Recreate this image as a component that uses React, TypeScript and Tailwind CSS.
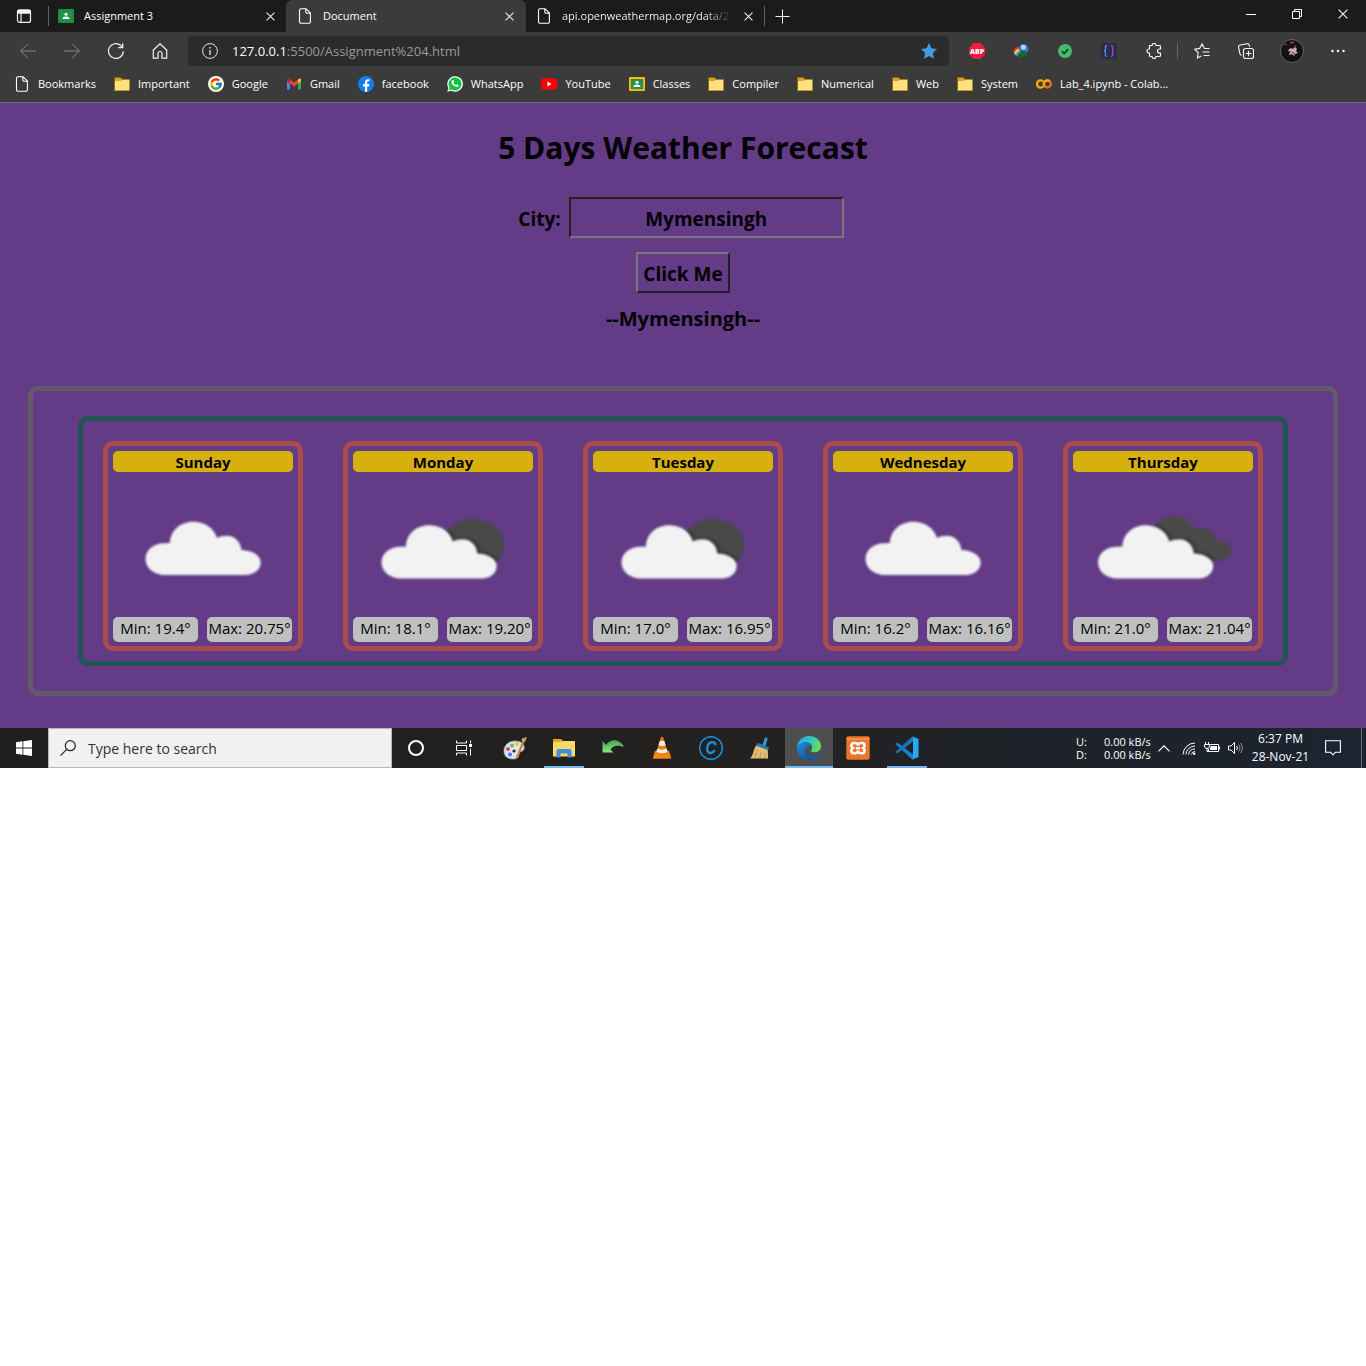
import React, { useState } from "react";
import { FcGoogle } from "react-icons/fc";

type IconProps = { className?: string };

const CLOUD =
  "M52 103C41 103 32.5 96 32.5 87C32.5 77 42 71 52 71.3L57 71C57 59 67 49.7 80 49.7C92 49.7 101 56 104 66C106 64.5 110 63.7 114 63.7C122 63.7 128 70 128.3 78C139 78.5 147.7 83 147.7 90.5C147.7 97.5 141 103 133 103Z";
const BACK_CLOUD =
  "M80 56C85 48 93 44 102 44C111 44 118 49 120.5 57C130 53 142 58 143 68.5C152 68.5 158.7 73 158.7 79C158.7 85 152 89 145 89L110 89Z";

type Sky = "cloudy" | "night" | "overcast";

function WeatherIcon({ sky, id }: { sky: Sky; id: string }) {
  const move = sky === "cloudy" ? "" : sky === "night" ? "translate(-4 3.5)" : "translate(-7.5 3.5)";
  return (
    <svg viewBox="0 0 180 145" className="h-[145px] w-full" aria-hidden="true">
      <defs>
        <clipPath id={id}>
          {sky === "night" ? <ellipse cx="119.7" cy="73" rx="31.5" ry="26" /> : <path d={BACK_CLOUD} />}
        </clipPath>
        <filter id={id + "-soft"}>
          <feGaussianBlur stdDeviation="0.9" />
        </filter>
        <filter id={id + "-shade"}>
          <feGaussianBlur stdDeviation="1.8" />
        </filter>
      </defs>
      {sky !== "cloudy" && (
        <g filter={`url(#${id}-soft)`}>
          <g clipPath={`url(#${id})`}>
            <rect width="180" height="145" fill="#484848" />
            <path d={CLOUD} transform={move + " translate(2 -1)"} fill="#2c2c2c" filter={`url(#${id}-shade)`} />
          </g>
        </g>
      )}
      <path d={CLOUD} transform={move} fill="#f2f2f2" filter={`url(#${id}-soft)`} />
    </svg>
  );
}

const PageIcon = ({ className = "h-4 w-4" }: IconProps) => (
  <svg viewBox="0 0 16 16" className={className} fill="none" stroke="#fff" strokeWidth="1.1">
    <path d="M3.9.7H9L13.4 5v8.8a1.5 1.5 0 0 1-1.5 1.5H4A1.5 1.5 0 0 1 2.5 13.800V2A1.400 1.400 0 0 1 3.900.7ZM8.800.9V4a1.300 1.300 0 0 0 1.300 1.300h3.200" />
  </svg>
);
const FolderIcon = () => (
  <svg viewBox="0 0 16 16" className="h-4 w-4">
    <path d="M.5 1.500h6L8 3.500h7.500v11H.5Z" fill="#d9a520" stroke="#8c6a0c" strokeWidth=".8" />
    <path d="M1 5h5.500L8 3.800h7.300v10.300H1Z" fill="#ffe080" />
    <path d="M.5 14.500h15" stroke="#c79a1e" />
  </svg>
);
const ClassroomIcon = ({ frame = "#fbbc04" }: { frame?: string }) => (
  <svg viewBox="0 0 16 16" className="h-4 w-4">
    <rect y="1" width="16" height="14" rx="1" fill={frame} />
    <rect x="1.800" y="3" width="12.400" height="10.200" fill="#25904f" />
    <circle cx="8" cy="6.300" r="1.500" fill="#fff" />
    <path d="M4.500 11c0-1.600 1.600-2.400 3.500-2.400s3.500.8 3.500 2.400Z" fill="#fff" />
  </svg>
);
const GoogleIcon = () => (
  <span className="flex h-4 w-4 items-center justify-center rounded-full bg-white">
    <FcGoogle size={14} />
  </span>
);
const GmailIcon = () => (
  <svg viewBox="0 0 16 16" className="h-4 w-4">
    <path d="M1 4v9.500h3V6.300Z" fill="#4285f4" />
    <path d="M15 4v9.500h-3V6.300Z" fill="#34a853" />
    <path d="M4 3.400 8 6.500l4-3.100v4L8 10.500 4 7.400Z" fill="#ea4335" />
    <path d="M1 4c0-1.800 1.700-1.800 3-.6v4L1 5.200Z" fill="#c5221f" />
    <path d="M15 4c0-1.800-1.700-1.800-3-.6v4l3-2.200Z" fill="#fbbc04" />
  </svg>
);
const FacebookIcon = () => (
  <svg viewBox="0 0 16 16" className="h-4 w-4">
    <circle cx="8" cy="8" r="8" fill="#1280f5" />
    <path d="M7 16v-5.600H5V8.100h2V6.400C7 4.300 8.200 3.200 10 3.200l1.500.1v2h-1c-1 0-1.300.6-1.300 1.200v1.600h2.200l-.4 2.300H9.200V16Z" fill="#fff" />
  </svg>
);
const WhatsAppIcon = () => (
  <svg viewBox="0 0 16 16" className="h-4 w-4">
    <path d="M.3 15.800 1.400 12A7.800 7.800 0 1 1 4.300 14.800Z" fill="#fff" />
    <path d="m1.800 14.300.8-2.800A6.500 6.500 0 1 1 4.700 13.500Z" fill="#12c143" />
    <path d="M5.400 4.200c.6-.4 1-.2 1.200.4l.5 1.200-.7 1c.6 1.100 1.500 1.900 2.700 2.400l.9-1 1.700.8c.2 1.300-.8 2.100-2 2-2.700-.3-5-2.600-5.300-4.900 0-.8.500-1.500 1-1.900Z" fill="#fff" />
  </svg>
);
const YouTubeIcon = () => (
  <svg viewBox="0 0 16 16" className="h-4 w-4">
    <rect y="2.300" width="16" height="11.400" rx="3" fill="#f00" />
    <path d="m6.400 5.600 4.200 2.400-4.200 2.400Z" fill="#fff" />
  </svg>
);
const ColabIcon = () => (
  <svg viewBox="0 0 16 16" className="h-4 w-4" fill="none" strokeWidth="2.300">
    <path d="M7.200 5.500A3.600 3.600 0 1 0 7.200 10.500" stroke="#f9ab00" />
    <circle cx="11.300" cy="8" r="3.500" stroke="#e8710a" />
    <path d="M8.800 10.500a3.500 3.500 0 0 1 5-5" stroke="#f9ab00" />
  </svg>
);
const CloseIcon = ({ className = "h-[9px] w-[9px]" }: IconProps) => (
  <svg viewBox="0 0 10 10" className={className} stroke="#f0f0f0" strokeWidth="1.200">
    <path d="m.6.6 8.800 8.800M9.400.6.6 9.400" />
  </svg>
);

const bookmarks: { name: string; icon: React.ReactNode }[] = [
  { name: "Bookmarks", icon: <PageIcon /> },
  { name: "Important", icon: <FolderIcon /> },
  { name: "Google", icon: <GoogleIcon /> },
  { name: "Gmail", icon: <GmailIcon /> },
  { name: "facebook", icon: <FacebookIcon /> },
  { name: "WhatsApp", icon: <WhatsAppIcon /> },
  { name: "YouTube", icon: <YouTubeIcon /> },
  { name: "Classes", icon: <ClassroomIcon /> },
  { name: "Compiler", icon: <FolderIcon /> },
  { name: "Numerical", icon: <FolderIcon /> },
  { name: "Web", icon: <FolderIcon /> },
  { name: "System", icon: <FolderIcon /> },
  { name: "Lab_4.ipynb - Colab...", icon: <ColabIcon /> },
];

function TabStrip() {
  return (
    <div className="flex h-8 items-stretch bg-[#1b1b1b] text-[11px] font-medium text-white">
      <button aria-label="Tab actions" className="flex w-12 items-center justify-center">
        <svg viewBox="0 0 16 16" className="h-4 w-4" fill="none" stroke="#f0f0f0" strokeWidth="1.200">
          <rect x="1.500" y="1.800" width="13" height="12.600" rx="2" />
          <path d="M2 2.500h12v2.600H2Z" fill="#f0f0f0" />
          <path d="M5 5v9" />
        </svg>
      </button>
      <div className="flex w-[238px] items-center pr-[11px]">
        <span className="h-5 w-px bg-[#606060]" />
        <span className="ml-[9px]"><ClassroomIcon frame="#1e8e3e" /></span>
        <span className="ml-2.5 flex-1">Assignment 3</span>
        <button aria-label="Close Assignment 3"><CloseIcon /></button>
      </div>
      <div className="flex w-60 items-center rounded-t-md bg-[#3b3b3b] pl-[11px] pr-3">
        <PageIcon />
        <span className="ml-2.5 flex-1">Document</span>
        <button aria-label="Close Document"><CloseIcon /></button>
      </div>
      <div className="flex w-[238px] items-center pl-2.5 pr-[11px]">
        <PageIcon />
        <span className="ml-2.5 flex-1 whitespace-nowrap">
          <span className="bg-linear-to-r from-white from-85% to-[#3a3a3a] bg-clip-text text-transparent">
            api.openweathermap.org/data/2
          </span>
        </span>
        <button aria-label="Close api.openweathermap.org"><CloseIcon /></button>
      </div>
      <span className="mt-1.5 h-5 w-px bg-[#606060]" />
      <button aria-label="New tab" className="flex w-[35px] items-center justify-center">
        <svg viewBox="0 0 15 15" className="h-[15px] w-[15px]" stroke="#f0f0f0">
          <path d="M7.500.5v14M.5 7.500h14" />
        </svg>
      </button>
      <div className="ml-auto flex pb-1">
        <button aria-label="Minimize" className="flex w-[46px] items-center justify-center">
          <span className="h-px w-2.5 bg-white" />
        </button>
        <button aria-label="Restore" className="flex w-[46px] items-center justify-center">
          <svg viewBox="0 0 10 10" className="h-2.5 w-2.5" fill="none" stroke="#fff">
            <path d="M.5 2.500h7v7h-7ZM2.500 2.500v-2h7v7h-2" />
          </svg>
        </button>
        <button aria-label="Close window" className="flex w-[46px] items-center justify-center">
          <CloseIcon className="h-2.5 w-2.5" />
        </button>
      </div>
    </div>
  );
}

function ToolButton({ label, className = "w-11", children }: { label: string; className?: string; children: React.ReactNode }) {
  return (
    <button aria-label={label} className={"flex shrink-0 items-center justify-center " + className}>
      {children}
    </button>
  );
}

function Toolbar() {
  return (
    <div className="flex h-[38px] items-center bg-[#3b3b3b] pl-1.5">
      <ToolButton label="Back">
        <svg viewBox="0 0 16 16" className="h-4 w-4" fill="none" stroke="#8a8a8a">
          <path d="M16 8H.7M8 .7.7 8 8 15.300" />
        </svg>
      </ToolButton>
      <ToolButton label="Forward">
        <svg viewBox="0 0 16 16" className="h-4 w-4" fill="none" stroke="#8a8a8a">
          <path d="M0 8h15.300M8 .7 15.300 8 8 15.300" />
        </svg>
      </ToolButton>
      <ToolButton label="Refresh">
        <svg viewBox="0 0 16 16" className="h-4 w-4" fill="none" stroke="#f5f5f5" strokeWidth="1.200">
          <path d="M15.300 8.200A7.400 7.400 0 1 1 12.800 2.500L14.500 4.300M14.700.2v4.400h-4.500" />
        </svg>
      </ToolButton>
      <ToolButton label="Home">
        <svg viewBox="0 0 16 16" className="h-4 w-4" fill="none" stroke="#f5f5f5" strokeWidth="1.200">
          <path d="M1.300 7 8 .9 14.700 7v8.200H10V10.500a2 2 0 0 0-4 0v4.700H1.300Z" />
        </svg>
      </ToolButton>
      <div className="ml-1.5 flex h-[30px] flex-1 items-center rounded bg-[#2b2b2b] pl-3.5 pr-3">
        <svg viewBox="0 0 16 16" className="h-4 w-4" fill="none" stroke="#e0e0e0">
          <circle cx="8" cy="8" r="7.400" />
          <path d="M8 7v5M8 4v1.500" strokeWidth="1.400" />
        </svg>
        <div role="textbox" aria-label="Address" className="ml-3.5 flex-1 pt-px text-[13px] text-[#9a9a9a]">
          <span className="text-white">127.0.0.1</span>:5500/Assignment%204.html
        </div>
        <button aria-label="Edit favorite">
          <svg viewBox="0 0 16 16" className="h-4 w-4" fill="#4a9ad9">
            <path d="m8 0 2.400 5.300 5.600.7-4.100 3.900L13 15.700 8 12.900 3 15.700l1.100-5.800L0 6l5.600-.7Z" />
          </svg>
        </button>
      </div>
      <div className="ml-1.5 flex items-center">
        <ToolButton label="Adblock Plus">
          <svg viewBox="0 0 16 16" className="h-4 w-4">
            <path d="M4.700 0h6.600L16 4.700v6.600L11.300 16H4.700L0 11.300V4.700Z" fill="#ed1e45" />
            <text x="8" y="10.700" textAnchor="middle" fontSize="7" fontWeight="800" fill="#fff">ABP</text>
          </svg>
        </ToolButton>
        <ToolButton label="Download manager">
          <svg viewBox="0 0 16 16" className="h-4 w-4">
            <circle cx="10.500" cy="6" r="5" fill="#3a74c4" />
            <circle cx="10.500" cy="4.200" r="2.500" fill="#b7d7f5" />
            <path d="M.3 10C.3 6.500 2.500 4 5.500 4L6 6C4 6.500 3 8 3 10.500Z" fill="#e03d2c" />
            <path d="M1.500 11.500C1.500 8 3.500 6 6 5.800L6.500 8C5 8.500 4 9.500 4 12Z" fill="#f4d83a" />
            <path d="M3 12.500C3 10 4.500 8 7 8l.5 2c-1.500 0-2.500 1-2.500 3Z" fill="#3f9fd8" />
            <path d="M7.500 7.500 15.800 10 13.500 11.500l1 1.500-3-.5-2.500 2.500-5-1.500 4-2Z" fill="#186b20" />
          </svg>
        </ToolButton>
        <ToolButton label="Checker">
          <svg viewBox="0 0 16 16" className="h-3.5 w-3.5">
            <circle cx="8" cy="8" r="8" fill="#46b970" />
            <path d="m4.500 8.400 2.500 2.400 4.700-5" fill="none" stroke="#20412c" strokeWidth="2" />
          </svg>
        </ToolButton>
        <ToolButton label="Code formatter">
          <svg viewBox="0 0 16 16" className="h-4 w-4" fill="none" strokeWidth="1.400">
            <rect width="16" height="16" fill="#2b2d42" />
            <path d="M6 2.500c-2 0-1.500 1.500-1.500 3S4 8 3 8c1 0 1.500 1 1.500 2.500s-.5 3 1.500 3" stroke="#4b86e8" />
            <path d="M10 2.500c2 0 1.500 1.500 1.500 3S12 8 13 8c-1 0-1.500 1-1.500 2.500s.5 3-1.500 3" stroke="#9b40e0" />
          </svg>
        </ToolButton>
        <ToolButton label="Extensions" className="w-[46px]">
          <svg viewBox="0 0 16 16" className="h-4 w-4" fill="none" stroke="#f5f5f5" strokeWidth="1.200">
            <path d="M3.500 2.500H6a2 2 0 0 1 4 0h3.500a1 1 0 0 1 1 1V6h-1a2 2 0 0 0 0 4h1v2.500a1 1 0 0 1-1 1H10a2 2 0 0 1-4 0H4.500a1 1 0 0 1-1-1V10H3a2 2 0 0 1 0-4h.5Z" />
          </svg>
        </ToolButton>
        <span className="h-4 w-px bg-[#686868]" />
        <ToolButton label="Favorites" className="w-12">
          <svg viewBox="0 0 16 16" className="h-4 w-4" fill="none" stroke="#f5f5f5" strokeWidth="1.100">
            <path d="M15.500 5.500h-5L8 .9 5.600 5.400.7 6.200l3.500 3.600-.8 5.200 3.800-2M8.500 9h7M9.500 12.500h6" />
          </svg>
        </ToolButton>
        <ToolButton label="Collections" className="w-10">
          <svg viewBox="0 0 16 16" className="h-4 w-4" fill="none" stroke="#f5f5f5" strokeWidth="1.100">
            <rect x="5.500" y="5.500" width="10" height="10" rx="2" />
            <path d="M10.500 7.700v5.600M7.700 10.500h5.600" />
            <path d="M3.600 12.400C2.400 12 2 11.300 1.800 10.300L.6 4.200C.4 3 1 2.200 2.100 2L9 .7c1.100-.2 1.900.3 2.200 1.400l.5 1.700" />
          </svg>
        </ToolButton>
        <ToolButton label="Profile" className="w-[52px]">
          <svg viewBox="0 0 24 24" className="h-6 w-6">
            <circle cx="12" cy="12" r="11.500" fill="#121212" stroke="#777" strokeWidth=".8" />
            <path d="m8 11 3-2 2 1 2-2 2 2-1 2 2 2-3 1-1 2-2-2-3 1 1-3Z" fill="#c7aeb0" />
            <path d="m4 6 3-1M10 4l4-1M12 13l3 2M8 12l3 1M14 8l2-1" stroke="#a83d42" strokeWidth="1.300" />
          </svg>
        </ToolButton>
        <ToolButton label="Settings and more" className="w-10">
          <svg viewBox="0 0 16 4" className="h-1 w-4" fill="#fff">
            <circle cx="2.500" cy="2" r="1.200" /><circle cx="8" cy="2" r="1.200" /><circle cx="13.500" cy="2" r="1.200" />
          </svg>
        </ToolButton>
        <span className="w-2" />
      </div>
    </div>
  );
}

function BookmarksBar() {
  return (
    <nav className="flex h-[33px] items-start gap-[18px] overflow-hidden border-b border-[#6b6b6b] bg-[#3b3b3b] px-3.5 pt-1.5 text-[11px] font-medium leading-4 text-white">
      {bookmarks.map((b) => (
        <a key={b.name} href="#" className="flex items-center gap-2 whitespace-nowrap">
          {b.icon}
          <span>{b.name}</span>
        </a>
      ))}
    </nav>
  );
}

const forecast: { day: string; min: string; max: string; sky: Sky }[] = [
  { day: "Sunday", min: "19.4", max: "20.75", sky: "cloudy" },
  { day: "Monday", min: "18.1", max: "19.20", sky: "night" },
  { day: "Tuesday", min: "17.0", max: "16.95", sky: "night" },
  { day: "Wednesday", min: "16.2", max: "16.16", sky: "cloudy" },
  { day: "Thursday", min: "21.0", max: "21.04", sky: "overcast" },
];

function Forecast() {
  const [city, setCity] = useState("Mymensingh");
  const [shown, setShown] = useState("Mymensingh");
  return (
    <main className="flex flex-col items-center bg-[#633b87] pb-8 pt-6 text-black">
      <h1 className="text-[30px] font-bold leading-[42px]">5 Days Weather Forecast</h1>
      <div className="mt-7 flex items-center gap-2 pr-1 text-[19px] font-bold">
        <label htmlFor="city" className="pt-1">City:</label>
        <input
          id="city"
          value={city}
          onChange={(e) => setCity(e.target.value)}
          className="h-[41px] w-[275px] border-2 border-b-[#767676] border-l-[#212121] border-r-[#767676] border-t-[#212121] bg-transparent pt-0.5 text-center"
        />
      </div>
      <button
        onClick={() => setShown(city)}
        className="mt-3.5 h-[41px] border-2 border-b-[#212121] border-l-[#767676] border-r-[#212121] border-t-[#767676] px-[5px] pt-1 text-[19px] font-bold"
      >
        Click Me
      </button>
      <p className="mt-3 text-[20px] font-bold leading-7">--{shown}--</p>
      <div className="mt-[53px] self-stretch px-7">
        <div className="rounded-[10px] border-[5px] border-[#625a68] px-[45px] py-[25px]">
          <div className="grid grid-cols-5 gap-10 rounded-[10px] border-[5px] border-[#215457] px-5 pb-2.5 pt-5">
            {forecast.map((f) => (
              <section key={f.day} className="rounded-[10px] border-[5px] border-[#a94c4c] px-[5px] pb-1 pt-[5px]">
                <h2 className="rounded-[5px] bg-[#d6b10d] pt-0.5 text-center text-[15px] font-bold leading-[19px]">{f.day}</h2>
                <WeatherIcon sky={f.sky} id={f.day} />
                <div className="grid grid-cols-2 gap-[9px] pr-px text-center text-[15px] leading-[23px]">
                  <span className="whitespace-nowrap rounded-[5px] bg-[#c0c0c0] pb-0.5">Min: {f.min}°</span>
                  <span className="whitespace-nowrap rounded-[5px] bg-[#c0c0c0] pb-0.5">Max: {f.max}°</span>
                </div>
              </section>
            ))}
          </div>
        </div>
      </div>
    </main>
  );
}

const PaintIcon = () => (
  <svg viewBox="0 0 24 24" className="h-6 w-6">
    <path d="M1 15C1 9 6 5 12 5c7 0 10 4 9 8-1 3-4 2-5 4s1 6-6 6C4 23 1 20 1 15Z" fill="#d7e7f2" stroke="#8badc8" strokeWidth=".7" />
    <circle cx="5" cy="13" r="1.900" fill="#d84040" /><circle cx="9" cy="9.500" r="2" fill="#79bd3d" />
    <circle cx="14" cy="8" r="1.900" fill="#f1c52f" /><circle cx="7" cy="18.500" r="2" fill="#3c86d0" /><circle cx="11" cy="15" r="1.600" fill="#21262a" />
    <path d="m12.500 22 6.500-16 2 .8-5.500 14-2.500 2.500Z" fill="#d88232" />
    <path d="M19 6c-1-3 0-4 1-4l4-1-1 3-2 3Z" fill="#c39a69" />
  </svg>
);
const ExplorerIcon = () => (
  <svg viewBox="0 0 24 24" className="h-6 w-6">
    <path d="M1 3h8l2 2h12v5H1Z" fill="#e4a31c" />
    <path d="M1 6h8l2-1h12v15.500H1Z" fill="#ffd767" />
    <path d="M4.500 21.500V15a2 2 0 0 1 2-2h11a2 2 0 0 1 2 2v6.500H15.500V17.500h-7v4Z" fill="#3c91d7" />
  </svg>
);
const UndoIcon = () => (
  <svg viewBox="0 0 24 24" className="h-6 w-6">
    <defs><linearGradient id="undo" x2="0" y2="1"><stop stopColor="#3da35f" /><stop offset="1" stopColor="#8ee67c" /></linearGradient></defs>
    <path d="M1.500 5v11.500h11L9.500 13.500c2.500-4 7-5 13.500-2.500C19 3 10 2 5 9Z" fill="url(#undo)" />
  </svg>
);
const ConeIcon = () => (
  <svg viewBox="0 0 24 24" className="h-6 w-6">
    <path d="m5 15-2 7.500h18L19 15Z" fill="#f58a12" stroke="#d66a05" strokeWidth=".6" />
    <path d="M11 1h2l5 16c-2 3-10 3-12 0Z" fill="#f47a0c" />
    <path d="m9.800 5 4.500.1 1.300 4c-2 1.200-5 1.200-7.100 0ZM7.500 12.500c2 1.500 7 1.500 9.100 0l1 3.200c-3 2.200-8 2.200-11.200 0Z" fill="#f0f0f0" />
  </svg>
);
const CopyrightAppIcon = () => (
  <svg viewBox="0 0 24 24" className="h-6 w-6" fill="none" stroke="#1094e8">
    <circle cx="12" cy="12" r="11.300" strokeWidth="1.400" />
    <path d="M16.500 9.300c0-4-6-4.400-7.700.2-1.800 5 .4 8 3.500 7.400 1.800-.3 2.700-1.300 3.400-2.800" strokeWidth="2.400" />
  </svg>
);
const BroomIcon = () => (
  <svg viewBox="0 0 24 24" className="h-6 w-6">
    <path d="m14.500 9 2.500-7.500 2.700.8L17.500 10Z" fill="#2e9de0" />
    <path d="M9 7.500c3-1.500 7 3 12 3.500l-1 3L8 10Z" fill="#2277b8" />
    <path d="M8 9.500 19.800 14 20 22.500H2c3-2 3-8 6-13Z" fill="#e0bd76" />
    <path d="M9.500 14 7 21M13 16l-1 6M17 17l-.5 5" stroke="#b28b45" fill="none" strokeWidth=".8" />
  </svg>
);
const EdgeIcon = () => (
  <svg viewBox="0 0 24 24" className="h-6 w-6">
    <defs>
      <linearGradient id="edge-top" x1="0" x2="1" y1=".3" y2=".6"><stop stopColor="#2aa7df" /><stop offset=".5" stopColor="#30c8c4" /><stop offset="1" stopColor="#6bdd49" /></linearGradient>
      <linearGradient id="edge-low" x2="1" y2="1"><stop stopColor="#1a8fdc" /><stop offset="1" stopColor="#104a9c" /></linearGradient>
    </defs>
    <path d="M0 11.500C.5 5 5.500 0 12 0c7 0 12 4.500 12 10 0 4-2.500 6.300-6.500 6.300-2.700 0-4-1-3.500-2 .8-1 1.300-1.800 1-3.300C14.500 5 5 4 0 11.500Z" fill="url(#edge-top)" />
    <path d="M0 11.500C1.500 8 5 6.500 8.500 6.500c4 0 6.500 2 6.500 4.500-2-2.200-7-.5-7 4 0 4.500 4 8 9 8.200C8 26.500 0 20 0 11.500Z" fill="url(#edge-low)" />
    <path d="M9 12.500c-2.500 6 4.500 10.500 13 5.800.5-.2.800 0 .5.500-1 2-3 3.800-5.500 4.500C9.500 23 6.500 17 9 12.500Z" fill="#135bb3" />
  </svg>
);
const XamppIcon = () => (
  <svg viewBox="0 0 24 24" className="h-6 w-6">
    <rect x=".3" y=".3" width="23.400" height="23.400" rx="2" fill="#ed742a" />
    <path d="M1 3h22" stroke="#f5aa77" />
    <path d="M8 7h1a3 3 0 0 1 3 2.500A3 3 0 0 1 15 7h1c3 0 3.500 3.500 1 5 2.500 1.500 2 5.300-1 5.300h-1a3 3 0 0 1-3-2.500 3 3 0 0 1-3 2.500H8c-3 0-3.500-3.800-1-5.300C4.500 10.500 5 7 8 7ZM10 12.200h4" fill="none" stroke="#fff" strokeWidth="2.600" />
  </svg>
);
const CodeIcon = () => (
  <svg viewBox="0 0 24 24" className="h-6 w-6">
    <path d="M.5 8.300 2.300 6.600 18 18.500V23.500L17 23.300Z" fill="#1483cc" />
    <path d="M.5 15.700 2.300 17.400 18 5.500V.5L17 .7Z" fill="#1b74b8" />
    <path d="M17 .3 23.500 3v18L17 23.700c1-.5 1-1 1-2V2.300c0-1 0-1.500-1-2Z" fill="#2aa9f3" />
  </svg>
);

const apps: { name: string; icon: React.ReactNode; state?: "open" | "active" }[] = [
  { name: "Paint", icon: <PaintIcon /> },
  { name: "File Explorer", icon: <ExplorerIcon />, state: "open" },
  { name: "Undo", icon: <UndoIcon /> },
  { name: "VLC", icon: <ConeIcon /> },
  { name: "Copyright", icon: <CopyrightAppIcon /> },
  { name: "Cleaner", icon: <BroomIcon /> },
  { name: "Microsoft Edge", icon: <EdgeIcon />, state: "active" },
  { name: "XAMPP", icon: <XamppIcon /> },
  { name: "Visual Studio Code", icon: <CodeIcon />, state: "open" },
];

function Taskbar() {
  return (
    <footer className="flex h-10 items-stretch bg-linear-to-r from-[#211f1e] via-[#23211f] to-[#1b2431] text-white">
      <button aria-label="Start" className="flex w-12 items-center justify-center">
        <svg viewBox="0 0 16 16" className="h-4 w-4" fill="#fff">
          <path d="M0 2.200 6.500 1.300v6.200H0ZM7.300 1.200 16 0v7.500H7.300ZM0 8.400h6.500v6.300L0 13.800ZM7.300 8.400H16V16l-8.700-1.200Z" />
        </svg>
      </button>
      <label className="flex w-[344px] items-center border border-[#b8b8b8] bg-[#f1f1f1] pl-[11px]">
        <svg viewBox="0 0 16 16" className="h-4 w-4" fill="none" stroke="#222" strokeWidth="1.200">
          <circle cx="10.300" cy="5.700" r="5" /><path d="M6.700 9.300.5 15.600" />
        </svg>
        <input aria-label="Search" placeholder="Type here to search" className="ml-3 min-w-0 flex-1 bg-transparent text-[14px] text-black outline-none placeholder:text-[#333]" />
      </label>
      <button aria-label="Cortana" className="flex w-12 items-center justify-center">
        <span className="h-4 w-4 rounded-full border-2 border-white" />
      </button>
      <button aria-label="Task view" className="flex w-12 items-center justify-center">
        <svg viewBox="0 0 16 16" className="h-4 w-4" fill="none" stroke="#fff">
          <path d="M.5.500v2.500h10V.500M.5 5.500h10v5H.5ZM.5 15.500V13h10v2.500M14.500.500v3M14.500 8.500v7" />
          <rect x="13" y="4" width="3" height="3" fill="#fff" stroke="none" />
        </svg>
      </button>
      <div className="ml-[3px] flex gap-px">
        {apps.map((a) => (
          <button
            key={a.name}
            aria-label={a.name}
            className={"relative flex w-12 items-center justify-center " + (a.state === "active" ? "bg-[#4d4e50]" : "")}
          >
            {a.icon}
            {a.state && (
              <span className={"absolute bottom-0 h-0.5 bg-[#76b9ed] " + (a.state === "active" ? "inset-x-0" : "inset-x-1")} />
            )}
          </button>
        ))}
      </div>
      <div className="ml-auto flex items-center">
        <div className="grid grid-cols-[28px_46px] text-[11px] leading-[13px]">
          <span>U:</span><span className="whitespace-nowrap text-right">0.00 kB/s</span>
          <span>D:</span><span className="whitespace-nowrap text-right">0.00 kB/s</span>
        </div>
        <button aria-label="Show hidden icons" className="flex w-7 justify-center">
          <svg viewBox="0 0 12 7" className="h-[7px] w-3" fill="none" stroke="#fff" strokeWidth="1.200"><path d="m.5 6.300 5.500-5.500 5.500 5.500" /></svg>
        </button>
        <div className="flex items-center gap-2 pl-1">
          <svg viewBox="0 0 14 14" className="h-3.5 w-3.5" fill="none" stroke="#fff">
            <path d="M1 13.500A12 12 0 0 1 13 2M3.800 13.500A9.300 9.300 0 0 1 13 5M6.500 13.500A6.600 6.600 0 0 1 13 8M9.300 13.500A4 4 0 0 1 13 10.500" />
            <circle cx="12.200" cy="12.700" r="1.200" fill="#fff" stroke="none" />
          </svg>
          <svg viewBox="0 0 16 14" className="h-3.5 w-4" fill="none" stroke="#fff">
            <path d="M6 3.500h8.500v7H4.500V8" /><path d="M15.500 5.500v3" />
            <path d="M7 5h6v4H6V7Z" fill="#fff" stroke="none" />
            <path d="M1.500 1v2M4.500 1v2M.5 3.500h5v1.500a2.500 2.500 0 0 1-5 0ZM3 7.500v3h2" />
          </svg>
          <svg viewBox="0 0 16 14" className="h-3.5 w-4" fill="none" stroke="#fff">
            <path d="M.5 5v4H3l3.500 3.500v-11L3 5ZM8.500 5a3 3 0 0 1 0 4" /><path d="M10.500 3.500a5 5 0 0 1 0 7M12.500 2a7.500 7.500 0 0 1 0 10" stroke="#8b9098" />
          </svg>
        </div>
        <div className="w-[73px] whitespace-nowrap text-center text-[12px] leading-[18px]">
          <p>6:37 PM</p>
          <p>28-Nov-21</p>
        </div>
        <button aria-label="Notifications" className="mr-5 ml-2 flex">
          <svg viewBox="0 0 16 16" className="h-4 w-4" fill="none" stroke="#fff" strokeWidth="1.100">
            <path d="M.6.7h14.800v11.600h-5L8 14.800l-2.400-2.500h-5Z" />
          </svg>
        </button>
        <button aria-label="Show desktop" className="h-10 w-[5px] border-l border-[#6d7178]" />
      </div>
    </footer>
  );
}

export default function App() {
  return (
    <div className="min-h-screen bg-white font-['Open_Sans','Noto_Sans',sans-serif]">
      <header>
        <TabStrip />
        <Toolbar />
        <BookmarksBar />
      </header>
      <Forecast />
      <Taskbar />
    </div>
  );
}
